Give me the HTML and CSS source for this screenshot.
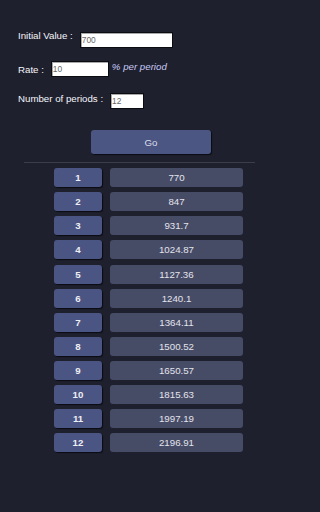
FILE: index.html
```html
<!DOCTYPE html>
<html>
<head>
<meta charset="utf-8">
<link rel="stylesheet" href="styles.css">
</head>
<body>
<div class="form">
  <div class="field field-initial">
    <span class="label">Initial Value :</span>
    <input class="input input-initial" type="text" value="700">
  </div>
  <div class="field field-rate">
    <span class="label">Rate :</span>
    <input class="input input-rate" type="text" value="10">
    <span class="note">% per period</span>
  </div>
  <div class="field field-periods">
    <span class="label">Number of periods :</span>
    <input class="input input-periods" type="text" value="12">
  </div>
</div>
<div class="go">Go</div>
<div class="divider"></div>
<div class="table">
  <div class="row"><div class="num">1</div><div class="val">770</div></div>
  <div class="row"><div class="num">2</div><div class="val">847</div></div>
  <div class="row"><div class="num">3</div><div class="val">931.7</div></div>
  <div class="row"><div class="num">4</div><div class="val">1024.87</div></div>
  <div class="row"><div class="num">5</div><div class="val">1127.36</div></div>
  <div class="row"><div class="num">6</div><div class="val">1240.1</div></div>
  <div class="row"><div class="num">7</div><div class="val">1364.11</div></div>
  <div class="row"><div class="num">8</div><div class="val">1500.52</div></div>
  <div class="row"><div class="num">9</div><div class="val">1650.57</div></div>
  <div class="row"><div class="num">10</div><div class="val">1815.63</div></div>
  <div class="row"><div class="num">11</div><div class="val">1997.19</div></div>
  <div class="row"><div class="num">12</div><div class="val">2196.91</div></div>
</div>
</body>
</html>
```
FILE: styles.css
```css
html, body {
  margin: 0;
  padding: 0;
}
body {
  background: #1f202e;
  font-family: "Liberation Sans", Arial, sans-serif;
  font-size: 9.7px;
  color: #f6f6fa;
  height: 512px;
  overflow: hidden;
}
.form {
  padding: 30.3px 0 0 18px;
}
.field {
  display: flex;
  align-items: flex-start;
  gap: 7px;
}
.label {
  line-height: 12px;
  white-space: nowrap;
}
.input {
  box-sizing: border-box;
  height: 16.4px;
  margin: 0;
  padding: 0 0 0 1px;
  border: 1px solid #0b0b12;
  box-shadow: inset 1px 1px 0 #a8a8a8;
  background: #ffffff;
  color: #666666;
  font-family: "Liberation Sans", Arial, sans-serif;
  font-size: 8.4px;
  outline: none;
}
.input-initial { width: 93px; }
.input-rate { width: 58px; }
.input-periods { width: 34px; }

.field-initial .input { margin-top: 1.7px; }
.field-rate { margin-top: 12.3px; }
.field-rate .label { margin-top: 3.2px; }
.field-periods { margin-top: 15.9px; }
.field-periods .label { margin-top: 0.5px; }

.note {
  line-height: 12px;
  font-style: italic;
  color: #c8cbf6;
  margin-left: -4px;
  white-space: nowrap;
}
.go {
  margin: 20.8px 0 0 91px;
  width: 120px;
  height: 24px;
  background: #4b5683;
  border-radius: 3px;
  box-shadow: 1px 1px 1px #0b0b12;
  color: #dcdeea;
  display: flex;
  align-items: center;
  justify-content: center;
  font-size: 9.7px;
}
.divider {
  margin: 7.5px 0 0 24px;
  width: 231px;
  height: 1px;
  background: #3b3d4d;
}
.table {
  margin: 5.5px 0 0 54px;
  display: flex;
  flex-direction: column;
  gap: 5.1px;
}
.row {
  display: flex;
  gap: 8px;
  height: 19px;
}
.num {
  width: 48px;
  background: #4b5583;
  border-radius: 3px;
  box-shadow: 1px 1px 1px #0b0b12;
  color: #eeeef4;
  font-weight: bold;
  display: flex;
  align-items: center;
  justify-content: center;
}
.val {
  width: 133px;
  background: #464b66;
  border-radius: 3px;
  color: #e4e4ec;
  display: flex;
  align-items: center;
  justify-content: center;
}
```
